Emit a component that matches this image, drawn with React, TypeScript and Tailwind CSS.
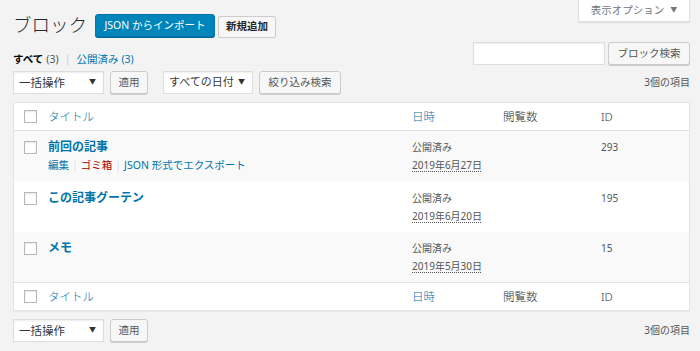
import React from 'react';

const font = { fontFamily: '"Noto Sans", "Noto Sans CJK JP", sans-serif' };

const rows = [
    { title: '前回の記事', date: '2019年6月27日', id: '293', actions: true },
    { title: 'この記事グーテン', date: '2019年6月20日', id: '195', actions: false },
    { title: 'メモ', date: '2019年5月30日', id: '15', actions: false },
];

const cols = 'grid grid-cols-[34px_364px_91px_98px_1fr]';

function Checkbox() {
    return <span className="block w-[13px] h-[13px] bg-white border border-[#b4b9be] shadow-[inset_0_1px_2px_rgba(0,0,0,0.1)]" />;
}

function GrayButton({ children, className = '' }: { children: React.ReactNode; className?: string }) {
    return (
        <button className={`h-[23px] whitespace-nowrap flex items-center justify-center text-[10.5px] leading-none text-[#555] bg-[#f7f7f7] border border-[#ccc] rounded-[3px] shadow-[0_1px_0_#ccc] ${className}`}>
            {children}
        </button>
    );
}

function Select({ label, width, size = 'text-[11.5px]' }: { label: string; width: string; size?: string }) {
    return (
        <div className={`h-[23px] ${width} whitespace-nowrap flex items-center justify-between pl-[5px] pr-[7px] bg-white border border-[#ddd] shadow-[inset_0_1px_2px_rgba(0,0,0,0.07)] ${size} text-[#32373c]`}>
            <span>{label}</span>
            <span className="text-[7px] text-[#333]">▼</span>
        </div>
    );
}

function HeaderRow({ top }: { top?: boolean }) {
    return (
        <div className={`${cols} h-[28px] items-center bg-white ${top ? 'border-b border-[#e1e1e1]' : 'border-t border-[#e1e1e1]'} text-[11.5px] whitespace-nowrap`}>
            <div className="pl-[10px]"><Checkbox /></div>
            <div className="text-[#0073aa] font-light">タイトル</div>
            <div className="text-[#0073aa] font-light">日時</div>
            <div className="text-[#32373c] font-light">閲覧数</div>
            <div className="text-[#32373c] font-light">ID</div>
        </div>
    );
}

export default function App() {
    return (
        <div style={font} className="relative w-[700px] h-[351px] bg-[#f3f3f3] text-[#444] overflow-hidden">
            {/* Screen options tab */}
            <div className="absolute top-0 right-[10px] w-[112px] h-[22px] bg-white shadow-[0_1px_1px_rgba(0,0,0,0.08)] border border-t-0 border-[#e1e1e1] flex items-center justify-center gap-[6px] text-[10.5px] text-[#72777c] whitespace-nowrap">
                <span>表示オプション</span>
                <span className="text-[7px]">▼</span>
            </div>

            <div className="pl-[13px] pr-[10px]">
                {/* Title row */}
                <div className="flex items-center pt-[14px] h-[37px]">
                    <h1 className="text-[18.5px] font-light text-[#23282d] leading-none mr-[8px] whitespace-nowrap">ブロック</h1>
                    <button className="w-[120px] h-[23px] whitespace-nowrap text-[10.5px] leading-none text-white bg-[#0085ba] border border-[#0073aa] rounded-[3px] shadow-[0_1px_0_#006799]">
                        JSON からインポート
                    </button>
                    <button className="ml-[3px] mt-[2px] w-[58px] h-[22px] whitespace-nowrap text-[10.5px] leading-none text-[#23282d] bg-[#f7f7f7] border border-[#ccc] rounded-[2px] font-semibold">
                        新規追加
                    </button>
                </div>

                {/* Filters + search */}
                <div className="flex justify-between items-start mt-[5px] h-[23px]">
                    <div className="mt-[10px] text-[10.5px] flex items-center gap-[3px] whitespace-nowrap">
                        <span className="font-bold text-black">すべて</span>
                        <span className="text-[#555]">(3)</span>
                        <span className="text-[#ccc] mx-[3px]">|</span>
                        <span className="text-[#0073aa]">公開済み</span>
                        <span className="text-[#0073aa]">(3)</span>
                    </div>
                    <div className="flex items-center gap-[3px]">
                        <div className="w-[132px] h-[23px] bg-white border border-[#ddd] shadow-[inset_0_1px_2px_rgba(0,0,0,0.07)]" />
                        <GrayButton className="w-[82px]">ブロック検索</GrayButton>
                    </div>
                </div>

                {/* Top tablenav */}
                <div className="flex items-center mt-[6px] h-[23px]">
                    <Select label="一括操作" width="w-[91px]" />
                    <GrayButton className="ml-[6px] w-[38px]">適用</GrayButton>
                    <div className="ml-[15px]"><Select label="すべての日付" width="w-[90px]" size="text-[11px]" /></div>
                    <GrayButton className="ml-[6px] w-[82px]">絞り込み検索</GrayButton>
                    <span className="ml-auto text-[10px] text-[#555] whitespace-nowrap">3個の項目</span>
                </div>

                {/* Table */}
                <div className="mt-[8px] border border-[#e5e5e5] shadow-[0_1px_1px_rgba(0,0,0,0.04)] bg-white">
                    <HeaderRow top />
                    {rows.map((r, i) => (
                        <div key={r.id} className={`${cols} ${i === 0 ? 'h-[51px]' : 'h-[50px]'} ${i % 2 === 0 ? 'bg-[#f9f9f9]' : 'bg-white'} whitespace-nowrap`}>
                            <div className="pl-[10px] pt-[10px]"><Checkbox /></div>
                            <div className="pt-[7px]">
                                <div className="font-bold text-[12px] text-[#0073aa] leading-[18px]">{r.title}</div>
                                {r.actions && (
                                    <div className="text-[10.5px] leading-[18px] flex items-center gap-[3px]">
                                        <span className="text-[#0073aa]">編集</span>
                                        <span className="text-[#ddd]">|</span>
                                        <span className="text-[#a00]">ゴミ箱</span>
                                        <span className="text-[#ddd]">|</span>
                                        <span className="text-[#0073aa]">JSON 形式でエクスポート</span>
                                    </div>
                                )}
                            </div>
                            <div className="pt-[7px] text-[10px] text-[#555] leading-[18px]">
                                <div>公開済み</div>
                                <div className="underline decoration-dotted underline-offset-2">{r.date}</div>
                            </div>
                            <div />
                            <div className="pt-[7px] text-[10px] text-[#555] leading-[18px]">{r.id}</div>
                        </div>
                    ))}
                    <HeaderRow />
                </div>

                {/* Bottom tablenav */}
                <div className="flex items-center mt-[8px] h-[23px]">
                    <Select label="一括操作" width="w-[91px]" />
                    <GrayButton className="ml-[6px] w-[38px]">適用</GrayButton>
                    <span className="ml-auto text-[10px] text-[#555] whitespace-nowrap">3個の項目</span>
                </div>
            </div>
        </div>
    );
}
